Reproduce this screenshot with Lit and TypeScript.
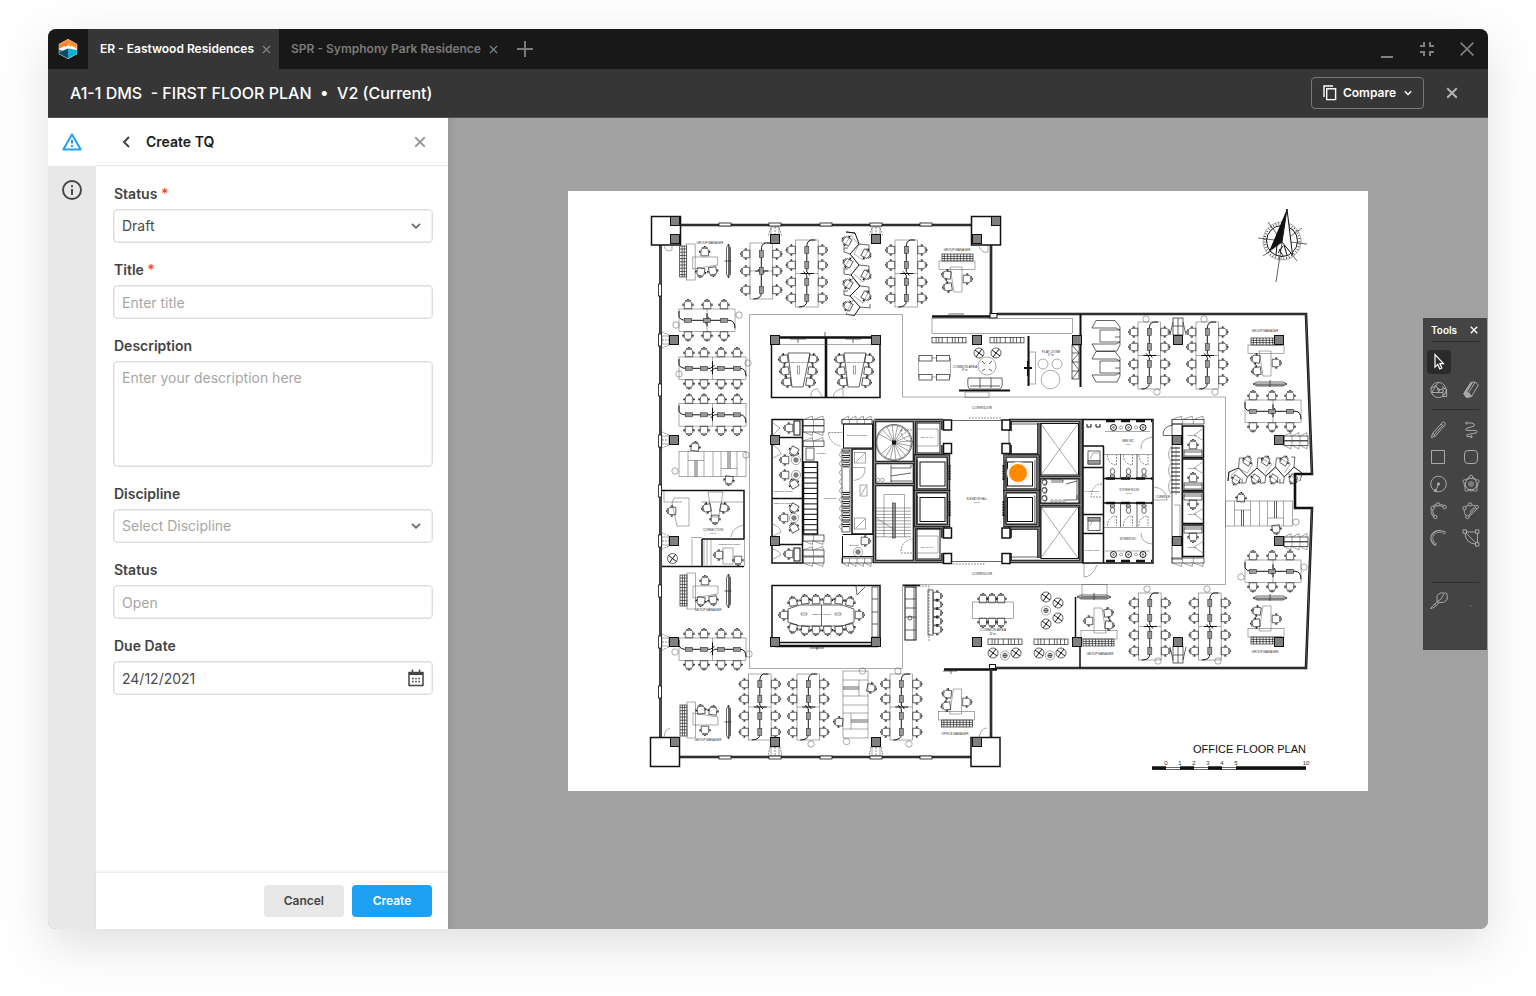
import { LitElement, html, svg, css } from "lit";
import { customElement, property } from "lit/decorators.js";

type Pt = [number, number];

/* ---------- small icons ---------- */
const cross = (size: number, w: number) => html`<svg width=${size} height=${size} viewBox="0 0 10 10" fill="none" stroke="currentColor" stroke-width=${w} aria-hidden="true"><path d="M1 1 9 9M9 1 1 9" /></svg>`;
const chevron = html`<svg class="chev" width="10" height="6" viewBox="0 0 10 6" fill="none" stroke="currentColor" stroke-width="1.7" aria-hidden="true"><path d="M1 .8 5 4.8 9 .8" /></svg>`;

const logo = html`<svg width="20" height="20" viewBox="0 0 20 20" aria-hidden="true">
  <path d="M10 0 19.2 5V15L10 20 .8 15V5Z" fill="#fff" />
  <path d="M10 .6 1.2 5.2V9.8L6.4 7 7.6 7.8 10 6.2Z" fill="#f47b30" />
  <path d="M10 .6 18.8 5.2V9.8L13.8 7 12.4 7.8 10 6.2Z" fill="#fba43a" />
  <path d="M10 .6 1.2 5.2V7.6L10 3.4 18.8 7.6V5.2Z" fill="#f98b34" />
  <path d="M10 9.4 1.2 13.2V14.8L10 19.4Z" fill="#0d4a68" />
  <path d="M1.2 10.6 5 11.6 1.2 13.4Z" fill="#1786ad" />
  <path d="M10 9.4 18.8 11V14.8L10 19.4Z" fill="#10a6cf" />
  <path d="M10 9.4 14.6 12.4 18.8 10.4V13L10 15Z" fill="#14b0d6" />
</svg>`;

/* ---------- palette icons ---------- */
const glyph = (body: unknown) => html`<svg width="20" height="20" viewBox="0 0 20 20" fill="none" stroke="currentColor" stroke-width="1" aria-hidden="true">${body}</svg>`;
const node = (x: number, y: number) => svg`<circle cx=${x} cy=${y} r="1.7" fill="#444" />`;
const box = (x: number, y: number) => svg`<path d="M${x - 1.7} ${y - 1.7}h3.4v3.4h-3.4z" fill="#444" />`;
const tools: Record<string, unknown> = {
  Select: glyph(svg`<path d="M6 2.6V15L8.8 12.4 10.8 17 12.8 16 10.9 11.6H14.4Z" stroke="#fff" stroke-width="1.2" />`),
  Fill: glyph(svg`<circle cx="9.5" cy="10" r="7.6" /><path d="M2 8.5 7 5.5 9.5 10 16.8 8.2M7 5.5 10 2.4M7 5.5 2.8 12.5H14M10 10V12.5M14 6V16.5H17.6V9" /><circle cx="9.5" cy="9.5" r="1" />`),
  Eraser: glyph(svg`<path d="M10 2.4 14.4 2 17.4 5 10.6 16.4 5.4 17.4 2.8 13.6Z" /><path d="M2.8 13.6 7.6 12.6 10.6 16.4 5.4 17.4ZM2.8 13.6 10 2.4 11.4 2.6 5 13.2Z" fill="currentColor" /><path d="M7.6 12.6 14.4 2" />`),
  Pencil: glyph(svg`<path d="M2.4 17.6 3.6 13.4 13.2 2.6Q15 1.4 16 2.6 17 3.6 15.8 5.2L6.4 16ZM3.6 13.4 6.4 16M12 4 14.8 6.4M5 14.8 13.8 5" />`),
  Freehand: glyph(svg`<path d="M4.5 3H11Q15 4 13 6L5.5 8.4Q3 10 6 10.4H14Q18 11 15 13L8 14.2Q4 14.6 6 16.6H11M6 1.5 4.5 3 6 4.6M9.6 15 11.4 16.6 9.6 18.2" />`),
  Rectangle: glyph(svg`<path d="M2.5 3.5h13v13h-13z" />`),
  "Rounded rectangle": glyph(svg`<rect x="3.5" y="3.5" width="13" height="13" rx="3.5" />`),
  Circle: glyph(svg`<circle cx="9.5" cy="10" r="7.8" /><path d="M9.5 10 7 16" /><circle cx="9.5" cy="10" r="1.2" fill="currentColor" /><circle cx="6.4" cy="16.6" r="1.2" fill="currentColor" />`),
  Polygon: glyph(svg`<path d="M10 3 16.4 7.4 14.5 15.5H5.5L3.6 7.4Z" /><circle cx="10" cy="10.200" r="6.800" /><circle cx="10" cy="10" r="2.3" /><circle cx="10" cy="10" r=".6" />${[[10, 3], [16.4, 7.4], [14.5, 15.5], [5.5, 15.5], [3.6, 7.4]].map(([x, y]) => node(x, y))}`),
  Arc: glyph(svg`<path d="M6.2 16Q1.4 12 3.6 6.6 8 1.4 15.4 5.4" stroke-width="2.4" /><path d="M6.2 16Q1.4 12 3.6 6.6 8 1.4 15.4 5.4" stroke="#444" stroke-width=".8" />${node(6.4, 16)}${node(3.6, 7)}${node(9, 3.4)}${node(15.6, 6)}`),
  Sector: glyph(svg`<path d="M6.4 16Q1.8 12 3.8 6.6 8 1.6 15.4 5.6L6.4 16M8.4 11.4 12.6 6.6M8 15.600 16.600 7.600" />${node(6.4, 16)}${node(3.6, 7)}${node(9, 3.4)}${node(15.8, 6)}`),
  Curve: glyph(svg`<path d="M7.2 17Q1.4 13.4 3.2 7.6 7 .8 16.4 5" stroke-width="2.8" /><path d="M7 16.6Q1.6 13.2 3.4 7.6 7 1.2 16 5" stroke="#444" stroke-width="1" />`),
  Bezier: glyph(svg`<path d="M4 4H16.4V16.4M4 4 16.4 16.4M4 4Q3.4 15.6 16.4 16.4" />${box(3.8, 3.6)}${box(16.2, 3.6)}${box(16.2, 16.4)}`),
  Brush: glyph(svg`<path d="M1.4 17.6Q5 17 7.6 14.4L10.4 11.4M1.6 17.4Q2.8 15.4 7.8 11.2M8 11V4.6L11.4 2H16.4Q18.4 2.2 18.2 4.4V8.6L14.6 11.4H9.8ZM8 11 12 8 14.8 3.2M5.4 13.2 7.6 14.6" />`),
  More: glyph(svg`<path d="M8.6 15.2h2.4" stroke="#666" />`),
};

/* ---------- floor plan building blocks ---------- */
const P = (d: string, cls = "n") => svg`<path class=${cls} d=${d} />`;
const R = (x: number, y: number, w: number, h: number, cls = "n") => svg`<rect class=${cls} x=${x} y=${y} width=${w} height=${h} />`;
const C = (x: number, y: number, r: number, cls = "n") => svg`<circle class=${cls} cx=${x} cy=${y} r=${r} />`;
const T = (x: number, y: number, s: string, size = 3) => svg`<text x=${x} y=${y} font-size=${size} text-anchor="middle">${s}</text>`;
const range = (n: number) => Array.from({ length: n }, (_, i) => i);

const chair = (x: number, y: number, a = 0) => svg`<g transform="translate(${x} ${y}) rotate(${a})">
  <path class="c" d="M-3.8-3.8H3.8L3.6 2.4Q3 3.8 0 3.8T-3.6 2.4ZM-3 4.2Q0 6 3 4.2M-5 0V1.6M5 0V1.6" />
  <path class="d" d="M-5.6-.8h1.4v1.4h-1.4zM4.2-.8h1.4v1.4h-1.4zM-.6 4.8h1.2v1.2h-1.2z" /></g>`;

const pillar = (x: number, y: number) => R(x - 4.5, y - 4.5, 9, 9, "pillar");

/* back-to-back benches, screens along the spine, seats on both sides */
const benchV = (x: number, y: number, h: number, seats: number[]) => {
  const m = y + h / 2, c = x + 11.3;
  return svg`${R(x, y, 22.6, h)}${P(`M${x} ${m}H${x + 22.6}`)}
    ${P(`M${x + 20} ${y}H${c + 4}Q${c} ${y + 1} ${c} ${y + 7}V${m - 2}L${c + 3} ${m + 2}M${c - 6} ${m}H${c + 7}M${c - 3} ${m - 2}L${c} ${m + 2}V${y + h - 6}Q${c} ${y + h} ${c - 8} ${y + h}`, "k2")}
    ${seats.map((s) => svg`${R(c - 2, y + s - 3.5, 4, 7, "m")}${chair(x - 4, y + s, 90)}${chair(x + 26.6, y + s, -90)}`)}`;
};
const benchH = (x: number, y: number, w: number, seats: number[]) => {
  const m = x + w / 2, c = y + 11.3;
  return svg`${R(x, y, w, 22.6)}${P(`M${m} ${y}V${y + 22.6}`)}
    ${P(`M${x} ${y + 2}V${c - 4}Q${x + 1} ${c} ${x + 7} ${c}H${m - 2}L${m + 2} ${c - 3}M${m} ${c - 7}V${c + 6}M${m - 2} ${c + 3}L${m + 2} ${c}H${x + w - 6}Q${x + w} ${c} ${x + w} ${c + 8}`, "k2")}
    ${seats.map((s) => svg`${R(x + s - 3.5, c - 2, 7, 4, "m")}${chair(x + s, y - 4, 180)}${chair(x + s, y + 26.6, 0)}`)}`;
};
const four = [10, 25, 42, 58];

const manager = (x: number, y: number, t = "") => svg`<g transform="translate(${x} ${y}) ${t}">
  ${R(-11, -16, 7, 31, "k")}${P("M-8.6-16V15M-6.4-16V15" + range(9).map((i) => `M-11 ${-13 + i * 3.2}H-4`).join(""), "k")}
  ${R(-4, -18, 8.4, 36)}${P("M2-5H27V3L2 7Z")}${chair(14, -10, 180)}${chair(10, 10, 8)}${chair(22, 9, -8)}</g>`;
const screen = (x: number, y: number, a = 0) => svg`<g transform="translate(${x} ${y}) rotate(${a})">
  ${P("M0-17 2-13V13L0 17-2 13V-13ZM0-17V17M1-14V14", "k")}${P("M-4 0H3", "k")}</g>`;

const shelf = (x: number, y: number, w = 34) => svg`${R(x, y, w, 5.4, "k")}${P([.12, .2, .3, .45, .6, .68, .78, .9].map((f) => `M${x + w * f} ${y}v5.4`).join(""), "k")}`;
const cabinets = (x: number, y: number, w: number, h: number, n: number, up: boolean) => {
  const s = w / n;
  return svg`${R(x, y, w, h, "k")}${range(n).map((i) => P(`M${x + i * s} ${y}v${h}M${x + i * s} ${up ? y : y + h}l${s - 1} ${up ? -3.4 : 3.4}v${up ? 3.4 : -3.4}`, "fine"))}`;
};
const window_ = (x: number, y: number, vertical = false) => (vertical ? R(x - 1.5, y - 6, 3, 12, "win") : R(x - 6, y - 1.5, 12, 3, "win"));
const fourChair = (x: number, y: number) => svg`${C(x, y, 5, "k")}${P(`M${x - 4} ${y - 3}L${x + 4} ${y + 3}M${x + 3} ${y - 4}L${x - 3} ${y + 4}`, "k2")}`;
const plant = (x: number, y: number) => svg`${C(x, y, 4.6)}${C(x, y, 2.2, "k")}${P(`M${x - 2} ${y}h4M${x} ${y - 2}v4`, "k")}`;

/* staggered desks running along a folded partition */
const zigzag = (tx: number, ty: number, t: string) => svg`<g transform="translate(${tx} ${ty}) ${t}">
  ${P("M3 0 12 1 16 12 7 22 16 33 8 43 17 54 7 64 17 75 11 84", "k2")}
  ${P("M3 0 12 1M16 12 26 13V17L23 17M7 22 1 20V16H5M16 33 26 34V38H23M8 43 1 42V37H5M17 54 26 55V59H23M7 64 1 63V59H5M17 75 27 76V72M3 82 11 84", "k")}
  ${P("M0 16 8 3 15 12M16 12 11 22 20 28 26 17M0 37 9 24 16 33M11 42 20 50 26 38M0 59 10 46 16 54M11 64 20 71 26 59M3 82 10 68 17 75")}
  ${chair(4, 9, 120)}${chair(5, 31, 120)}${chair(5, 52, 120)}${chair(5, 74, 120)}${chair(23, 22, -60)}${chair(23, 43, -60)}${chair(23, 64, -60)}</g>`;

const lounge = (x: number, y: number) => svg`${R(x, y, 67, 25)}${P(`M${x + 9} ${y}v25M${x + 25} ${y}v25M${x + 34} ${y}v25M${x + 42} ${y}v25M${x + 58} ${y}v25M${x + 9} ${y + 9}h16M${x + 42} ${y + 17}h16`)}
  ${P(`M${x + 16} ${y + 9}v16M${x + 18} ${y + 9}v16M${x + 49} ${y}v17M${x + 51} ${y}v17`, "k")}`;

const meeting = (x: number) => svg`${P(`M${x} 353h22l-7 34h-11z`, "k")}${R(x + 9.5, 366, 2, 8, "fine")}
  ${chair(x - 4, 359, 82)}${chair(x - 3, 371, 82)}${chair(x - 1, 382, 82)}${chair(x + 25, 359, -82)}${chair(x + 24, 371, -82)}${chair(x + 22, 382, -82)}${T(x + 11, 362.5, "MEETING ROOM", 2.4)}`;

const lift = (x: number, y: number, car: number) => svg`${R(x, y, 33, 34, "shaft")}${R(x, y, 33, 34, "core")}${R(x + 1.8, y + 1.8, 29.4, 30.4)}${R(car, y + 6, 25, 24, "k2")}${P(`M${car - 2.4} ${y + 4}v28M${car + 27.4} ${y + 4}v28`, "k")}`;

const cubicle = (y: number, flip: boolean) => svg`${R(1182.5, y, 21, 31.5, "w2")}
  ${R(1184, flip ? y + 2 : y + 24, 18, 6, "k")}${P(`M1184 ${flip ? y + 4 : y + 26}h18`, "k")}
  ${chair(1193, flip ? y + 12 : y + 19, flip ? 0 : 180)}${P(`M1204 ${flip ? y + 16 : y + 2}L1194 ${flip ? y + 22 : y + 9}L1204 ${flip ? y + 29 : y + 15}`)}
  ${T(1192, flip ? y + 22.6 : y + 10, "MEETING", 2)}`;

const wc = (y: number, up: boolean) => svg`${[1112.5, 1128.5, 1144].map((x) => svg`${R(x - 2, up ? y + 6 : y - 4, 4, 2, "k")}${svg`<ellipse class="k" cx=${x} cy=${up ? y + 2.4 : y + 1.4} rx="2.2" ry="3" />`}
  ${P(up ? `M${x - 5} ${y - 14}q0 9 9 10v-10` : `M${x - 5} ${y + 17}q0-9 9-10v10`, "dash")}`)}`;

const grid: Pt[] = [
  [675, 221], [675, 239], [775, 239], [876, 239], [996, 221], [977, 239],
  ...[674, 775, 876, 977, 1077, 1178, 1279].map((x) => [x, 340] as Pt),
  ...[440, 541].flatMap((y) => [674, 775, 1177, 1279].map((x) => [x, y] as Pt)),
  ...[674, 775, 876, 977, 1077, 1178, 1279].map((x) => [x, 642] as Pt),
  [675, 742], [775, 742], [876, 742], [977, 742],
];

const shell = svg`
  ${P("M681 225H972M660.5 245V737M991 245V317M680 757H971M991 668V737M932 316.5H997M944 669.5H997M997 314H1306L1312 474H1295V508H1312L1306 668H996", "wall")}
  ${P("M681 225H972M660.5 245V737M680 757H971M997 314H1306L1312 474M1312 508 1306 668H996M991 245V317M991 668V737", "mid")}
  ${R(990, 313.5, 7, 4.5, "paper")}${R(989.5, 664.5, 6, 4, "paper")}
  ${R(651.5, 216.5, 29, 28.5, "w2")}${R(971.5, 216.5, 29, 28.5, "w2")}${R(650.5, 737.5, 29, 29, "w2")}${R(971, 737.5, 29, 29, "w2")}
  ${[725, 775, 826, 876, 926].map((x) => svg`${window_(x, 224.5)}${window_(x, 757.5)}`)}
  ${[290, 340, 390, 441, 491, 541, 591, 642, 692].map((y) => window_(660, y, true))}
  ${P("M749.5 668.5V314.5H902.5V397H1225.5V584.5H902.5V668.5Z")}
  ${P("M664 245q1 8 8 5V246M979 246q3 8 9 6V246M664 737q1-8 6-9M979 737q2-9 8-9")}`;

const clusters = svg`
  ${manager(690.7, 262)}${screen(728.5, 261)}${T(710, 243.6, "GROUP MANAGER")}
  ${manager(691, 591)}${screen(728.5, 591)}${T(708, 611, "GROUP MANAGER")}
  ${manager(691, 720, "scale(1 -1)")}${screen(728.5, 722)}${T(708, 741, "GROUP MANAGER")}
  ${manager(957, 265, "rotate(90)")}${T(957, 251, "GROUP MANAGER")}
  ${manager(1266, 349, "rotate(90)")}${screen(1270, 384, 90)}${T(1265, 332, "GROUP MANAGER")}
  ${manager(956.5, 716, "scale(1 -1) rotate(90)")}${T(955, 735, "OFFICE MANAGER")}
  ${manager(1099, 635, "rotate(-90)")}${screen(1094, 597, 90)}${T(1100, 655, "GROUP MANAGER")}
  ${manager(1266, 633, "scale(1 -1) rotate(90)")}${screen(1270, 598, 90)}${T(1265, 653, "GROUP MANAGER")}
  ${benchV(750, 243, 56, [11, 28, 47])}${benchV(795.5, 240, 67, four)}${benchV(895, 240, 67, four)}
  ${benchV(1138, 322, 67, four)}${benchV(1196, 322, 67, four)}
  ${benchV(1138.5, 593, 67, four)}${benchV(1198.5, 593, 67, four)}
  ${benchV(748.5, 674, 66, four)}${benchV(797, 674, 66, four)}${benchV(890, 674, 66, four)}
  ${benchH(679, 309, 56, [9, 28, 45])}${benchH(679, 357, 67, four)}${benchH(679, 403.5, 67, four)}${benchH(679, 638, 67, four)}
  ${benchH(1245, 400, 56, [8, 27, 45])}${benchH(1245, 560, 56, [8, 27, 45])}
  ${[[739, 315], [676, 325], [748, 363], [679, 374], [746, 455], [675, 471], [675, 652], [749, 654], [1146, 319], [1157, 392], [1204, 319], [1215, 392], [1147, 589], [1207, 589], [1158, 661], [1218, 661], [1304, 567], [1241, 577], [1296, 522], [862.5, 671], [898, 671], [811, 744], [846.5, 741.5], [909, 744]].map(([x, y]) => C(x, y, 3.2))}
  ${zigzag(843, 232, "")}${zigzag(1228, 484, "rotate(-90) scale(1 .88)")}
  ${lounge(679, 451.5)}${lounge(1225.5, 501)}${chair(695, 447, 188)}${chair(729, 480, 8)}${chair(1241, 498, 185)}${chair(1276, 529, -8)}
  <g transform="translate(868 671) rotate(90)">${lounge(0, 0)}</g>${chair(871, 688, -80)}${chair(839, 722, 95)}`;

const rooms = svg`
  ${P("M771.5 337V397.5H880V337", "w2")}${P("M771.5 337.5H880M826 337V397", "wall")}${P("M771 344.5H880M811 397.5q-1-8 6-9l6 9M833 397.5q1-8 10-9v9")}
  ${P("M790 339h16M845 339h16M798 339v4M853 339v4M825 332v5", "k")}${meeting(788)}${meeting(844)}
  ${R(772, 585.5, 108, 57, "w2")}${P("M775 646H878", "wall")}${P("M810 648h14M817 646v4", "k")}
  ${P("M788 609 800 605H842L854 609V622L842 626H800L788 622ZM821.5 605v21", "k")}${R(801, 613, 6, 2, "fine")}${R(835, 613, 6, 2, "fine")}${T(821.5, 615, "MEETING ROOM", 2.4)}
  ${[793, 805, 816, 827.5, 839, 850].map((x, i) => svg`${chair(x, i % 5 ? 600 : 602, 180 + (i - 2.5) * 5)}${chair(x, i % 5 ? 630 : 628, -(i - 2.5) * 5)}`)}${chair(784, 615, 90)}${chair(859, 615, -90)}
  ${R(872, 587, 6, 50, "k")}${P("M872 599h6M872 612h6M872 624h6M856 586l1 9 8-8", "k")}
  ${P("M662 490.5H744V539M662 566.5H744M702 539V566M702 539H744", "w2")}${P("M744.5 539V566M664 491v11h18M701 502h43M704 540v25M707 540v25M711 540v25M692 539v26M731 537q1-9 12-12")}
  ${P("M674 498H689V526H677L672 503ZM708 492h15l-4 25h-7z")}${R(723, 548, 10, 16)}${P("M691 537.5h11")}
  ${chair(672, 511, 90)}${chair(707, 508, 80)}${chair(724, 508, -80)}${chair(715, 519, 0)}${chair(719, 555, 90)}${chair(738, 560, 0)}${fourChair(672.5, 558.5)}
  ${T(713, 530.6, "CONNECTION", 3)}${T(713, 533.6, "48.5 m²", 2.2)}${T(729, 545, "CONNECTION ROOM", 2.2)}`;

const commons = svg`
  ${R(932, 318.5, 140.5, 15)}${shelf(932, 337.5)}${shelf(990, 337.5)}
  ${R(918.5, 358, 32, 19)}${[[919, 355.5], [936.5, 355.5], [919, 374.5], [936.5, 374.5]].map(([x, y]) => R(x, y, 13, 5.5, "k paper"))}
  ${C(987, 366, 9)}${fourChair(979, 353)}${fourChair(996, 353)}${P("M982 361l3 3M992 361l-3 3M982 371l3-2M992 371l-3-2", "k")}
  ${T(965, 367.5, "COMMON AREA", 3.2)}${T(965, 371, "37 m²", 2.6)}
  ${P("M968 378q-1 10 2 11H1000q3-1 2-11ZM980 378v10M991 378v10M970 386h30", "k")}${P("M959 390.5H1010", "mid2")}${R(965, 392, 24, 5.5)}
  ${P("M1028.5 336V386M1080.5 314V387", "wall3")}${R(1029.5, 352, 6, 32)}${P("M1028 361v15M1024 368h8", "mid2")}
  ${C(1043, 364, 5)}${C(1057, 364, 5)}${C(1050.5, 379.5, 9.3)}${T(1051, 352.5, "PLAY ZONE", 3.4)}${T(1051, 356, "17 m²", 2.6)}
  ${R(1072, 345, 7, 34, "k")}${P("M1072 345l7 8-7 8 7 9-7 9M1072 353h7M1072 362h7M1072 371h7", "k")}
  ${[0, 31].map((o) => P(`M1092 ${328 + o}L1096 ${320.5 + o}H1115L1120 ${327 + o}V${345 + o}L1117 ${351 + o}H1096L1092 ${344 + o}M1092 ${328 + o}h24l4 2M1092 ${344 + o}h24l4-2M1120 ${330 + o}H1100v12h20M1115 ${337 + o}h5`, "k"))}
  ${P("M903 585.5H920M1075.5 597V640M1080 642V668", "w2")}
  ${R(905, 587, 11, 53, "k2")}${P("M905 599h11M905 608h11M905 617h11M905 630h11M914 587v53", "k")}${C(910, 618, 2, "k")}
  ${R(928, 590, 5, 45, "k")}${range(5).map((i) => chair(937, 596 + i * 8.4, -90))}${P("M916 586H929V641", "dash")}
  ${R(972.5, 602, 41, 16.5)}${[983, 992, 1001].map((x) => svg`${chair(x, 599, 180)}${chair(x, 622, 0)}`)}
  ${T(993, 631, "COMMON AREA", 3.4)}${T(993, 634.5, "82 m²", 2.6)}
  ${fourChair(1046, 597)}${fourChair(1058, 603)}${fourChair(1058, 618)}${fourChair(1046, 624)}${plant(1046, 610.5)}
  ${shelf(988, 639)}${shelf(1034, 639)}
  ${fourChair(993, 653)}${fourChair(1016, 653)}${plant(1005, 655.5)}${fourChair(1039, 653)}${fourChair(1061, 653)}${plant(1050, 655.5)}
  ${R(1082, 584.5, 25, 12)}${P("M943 671h14M951 671v3M949 316.5v-3M950 314h14", "k")}
  ${T(982, 408.5, "CORRIDOR", 3.8)}${T(982, 574.6, "CORRIDOR", 3.8)}`;

const services = svg`
  ${R(772, 419.5, 30.5, 143.5, "w2")}${P("M772 437.5H802M772 498.5H802M772 544.5H802", "w2")}
  ${chair(794, 451, 30)}${chair(785, 460, 90)}${chair(785, 475, 90)}${chair(794, 484, 150)}${plant(796, 460)}${plant(796, 475)}
  ${chair(794, 508, 30)}${chair(784, 518, 90)}${chair(794, 528, 150)}${plant(794, 518)}${chair(789, 428, 90)}${chair(789, 554, 90)}
  ${P("M773 423l7 5-7 7M773 445q7 4 8 9l-8 4M773 524q8 4 8 8l-8 4M773 549q7 2 8 6l-8 4")}${R(794, 421, 6, 14, "k2")}${R(794, 548, 6, 13, "k2")}
  ${T(783, 491.5, "MEETING ROOM", 2.4)}${T(783, 504, "MEETING ROOM", 2.4)}
  ${cabinets(803, 419.5, 21, 6, 2, true)}${cabinets(803, 426, 21, 6, 2, false)}${cabinets(803, 441, 21, 5.5, 2, true)}${cabinets(803, 535, 21, 6, 2, false)}${cabinets(803, 550, 21, 6, 2, true)}${cabinets(803, 557, 21, 6, 2, false)}
  ${R(806, 448, 8, 12, "k")}${R(803.5, 462, 14, 72, "w2")}${P(range(13).map((i) => `M803 ${467.5 + i * 5.2}h15`).join(""), "k2")}
  ${T(821, 454, "PRINTER", 2.2)}${T(830, 498.5, "CORRIDOR", 2.4)}
  ${cabinets(842, 419.5, 30, 4.5, 4, true)}${R(843.5, 424, 29, 24, "k2")}${T(857, 436.4, "ELECTRIC ROOM", 2.4)}${P("M828.5 432.5H842M828.5 433q1 11 12 13", "dash")}
  ${R(842, 449, 8, 83, "k")}${P([...range(4), 9, 10, 11, 12, 13, 14, 15, 16].map((i) => `M842 ${451 + i * 4.6}h8M843 ${453 + i * 4.6}h6`).join(""), "k2")}${P(range(9).map((i) => `M842 ${451 + i * 9}q-5 4 0 7`).join(""), "fine")}
  ${R(852, 449, 21, 85, "w2")}${R(854.5, 452.5, 11, 10.5)}${R(860, 485, 7, 11)}${R(854.5, 518, 11, 11)}${P("M856 462l9-9M861 495l5-9M856 528l9-9M853 467.5h12q1 11-11 13")}
  ${P("M842.5 534.5H873M842.5 536V563M842 556.5H873", "k2")}${chair(865, 541, -90)}${plant(858, 552)}${cabinets(842, 558, 30, 5, 4, false)}${T(854, 545.6, "BUFFET", 2.2)}
  ${R(1172, 424, 10, 135, "k")}${P(range(12).map((i) => `M1171 ${448 + i * 4}h9`).join(""), "k2")}${P("M1171 447q-5 8 0 15M1171 463q-5 8 0 15M1171 479q-5 8 0 15M1176 446v49M1174 505h6v32h-6")}
  ${cabinets(1172, 419.5, 32, 4.5, 3, true)}${cabinets(1172, 558, 32, 5, 3, false)}
  ${cubicle(426, false)}${cubicle(459, false)}${cubicle(492, true)}${cubicle(525, true)}${P("M1163 435.5H1172M1163 435q0-9 10-10", "k")}
  ${R(1173, 318, 10, 17, "k")}${P("M1173 326h10M1178 318v17M1173 322l-3 13M1183 322l3 13", "k")}
  ${R(1173, 646, 10, 17, "k")}${P("M1173 655h10M1178 646v17M1173 660l-3-13M1183 660l3-13", "k")}
  ${[436, 537].map((y) => svg`${cabinets(1284, y, 24, 4.5, 3, true)}${cabinets(1284, y + 5, 24, 4.5, 3, false)}`)}
  ${[775, 876].map((x) => svg`${R(x - 4, 227, 8, 8)}${P(`M${x} 227v8M${x - 4} 228l-3 8M${x + 4} 228l3 8`, "dash")}${R(x - 4, 747, 8, 9)}${P(`M${x} 747v9M${x - 5} 747l-2 9M${x + 5} 747l2 9`, "dash")}`)}
  ${[340, 440, 541, 642].map((y) => svg`${R(662, y - 4, 7, 8)}${P(`M662 ${y}h7M669 ${y - 5}l-7-3M669 ${y + 5}l-7 3`, "dash")}`)}`;

const treads = range(17).map((i) => {
  const a = (-150 + i * 18) * (Math.PI / 180);
  return `M894 442.5L${894 + 17.5 * Math.cos(a)} ${442.5 + 17.5 * Math.sin(a)}`;
}).join("");

/* structural walls: dark outline with a grey fill down the middle */
const coreWalls = "M874.5 420.5H943M874.5 420.5V561.5H943M914.5 420V561M875 462.5H914M875 484.5H914M915 455.5H943M915 527.5H943M943 421V430M943 445V456M943 527V538M943 553V562"
  + "M1009 420.5H1081V561.5H1009M1010 421V431M1010 445V455H1040M1010 553V561M1010 538V528H1040M1039 423V558M1039 477.5H1081M1039 504.5H1081";

const core = svg`
  ${P(coreWalls, "thick")}${P(coreWalls, "core")}
  ${C(894, 442.5, 18, "k")}${C(894, 442.5, 17)}${P(treads, "fine")}${R(892, 440.5, 4, 4, "d")}
  ${R(917, 423, 23, 30, "k2")}${R(917, 529, 23, 30, "k2")}${P("M917 429h21v17h-21M917 536h21v17h-21")}${P("M901 430H913M901 430q0 11 12 12M901 553H913M901 551q1-11 12-12", "dash")}${T(927, 437.5, "TEC. SHAFT", 2.2)}${T(927, 548, "TEC. SHAFT", 2.2)}
  ${P("M891 465v17M891 468h20v-3M891 476l20-3M891 482v-1h21", "k")}${C(878, 480, 1.8)}${C(882.5, 480, 1.8)}
  ${P("M884 537V494.5H904.5V537")}${R(892.5, 503, 3, 35, "m")}${P(range(10).map((i) => `M876 ${508 + i * 3.2}H911`).join(""), "fine")}${P("M876 518 895 530")}
  ${lift(915.5, 456, 920)}${lift(915.5, 491.5, 920)}${lift(1005, 456, 1007.5)}${lift(1005, 491.5, 1007.5)}
  ${[[943.5, 420], [943.5, 443.5], [943.5, 528], [943.5, 553.5], [1002, 420], [1002, 443.5], [1002, 528], [1002, 553.5]].map(([x, y]) => R(x, y, 8, 10, "w2 paper"))}
  ${P("M952 420.5H1002M952 561.5H1002", "k")}${P("M969 418h32v3M953 564h31v-3", "dash")}${P("M949.5 465V480M949.5 501V516M1003.5 465V480M1003.5 501V516", "mid3")}
  ${T(977, 500, "ELEVATOR HALL", 2.6)}${T(977, 503, "52 m²", 2.2)}
  ${R(1041, 423.5, 37.5, 51.5, "k2")}${R(1041, 507, 37.5, 51.5, "k2")}${P("M1041 424 1078 475M1078 424 1041 475M1041 507 1078 558M1078 507 1041 558")}${P("M1009 424H1039M1009 445V430M1009 557H1039", "k")}
  ${R(1041, 479, 37.5, 24, "k")}${[[1044.5, 482], [1044.5, 490], [1044.5, 498]].map(([x, y]) => svg`${C(x, y, 2.6, "k")}${P(`M${x - 2} ${y - 1}q3-3 4 1t-3 3`, "k")}`)}${P("M1051 480h12v2h-12M1066 484l11-3M1077 480V500M1065 500h12v-5", "k")}${[1052, 1056, 1060, 1064].map((x) => C(x, 501, 1.3, "fine"))}
  ${R(1083, 419.5, 70, 143.5, "w3")}${P("M1103.5 446V563M1083 446H1104M1083 467.5H1104M1083 514.5H1104M1083 533.5H1104M1103 478.5H1153M1103 503H1153", "w3")}
  ${[[1088, 451], [1088, 517.5]].map(([x, y]) => svg`${R(x, y, 12, 13, "k")}${P(`M${x + 2} ${y + 8}l3-6h6`)}`)}${R(1088, 460.5, 12, 3.6, "m")}${R(1088, 517.5, 12, 3.6, "m")}
  ${P("M1106 421H1152M1106 561H1152M1106 478.500H1152M1106 503H1152", "dashwall")}${P("M1105 431.500H1150M1105 551H1150")}${[1113.5, 1128.5, 1143].map((x) => svg`${C(x, 427.5, 3, "k2")}${C(x, 554.5, 3, "k2")}${C(x, 427.5, .8, "k")}${C(x, 554.5, .8, "k")}`)}${[1121, 1136].map((x) => svg`${C(x, 427.5, 1.5)}${C(x, 554.5, 1.5)}`)}
  ${P("M1104 454.500H1152M1104 527.500H1152", "fine")}${P("M1120.5 454V478M1137 454V478M1120.5 503V527M1137 503V527", "k")}${wc(469, true)}${wc(509, false)}
  ${P("M1087 424v3h4v-3M1096 424v3h4v-3", "k2")}${T(1128, 442, "MEN WC", 2.8)}${T(1128, 445, "18 m²", 2)}${T(1128, 539.5, "WOMEN WC", 2.8)}${T(1129, 491, "SYSTEM ROOM", 2.6)}${T(1129, 494, "15.8 m²", 2)}${T(1092, 491.5, "SYSTEM ROOM", 2)}${T(1092, 550.5, "SYSTEM ROOM", 2)}${T(1163, 497.5, "CORRIDOR", 2.6)}
  ${P("M1141 449q-1-10 11-12M1141 533q0 10 11 11M1154 487q12 1 13 13h-13M1084 563v14q8 0 13-12")}${P("M1102 484q-10 0-11 13h11", "dash")}`;

const compass = svg`<g transform="translate(1282 241)">
  ${C(0, 0, 19)}${C(0, 0, 15.5, "k2")}<circle class="tick" r="17.500" />
  ${P("M-24-3 25 3M-14-19 15 20M20-13-19 15M5-32-6 41", "k")}
  <path class="d" d="M5-32-13 10.500 0 1Z" /><path class="k2 paper" d="M5-32 0 1 10.500 14Z" />
  ${P("M-5 4l-1 10M-3 8l4 7M2 4l3 10M-4 12l5-7", "k2")}</g>`;

const scale = svg`<g>
  ${P("M1152 767.500H1306", "k")}${P("M1152 768H1166M1180 768H1194M1208 768H1222M1236 768H1306", "bar")}${P("M1152 769.500H1306", "k")}
  ${[["0", 1166], ["1", 1180], ["2", 1194], ["3", 1208], ["4", 1222], ["5", 1236], ["10", 1306]].map(([s, x]) => svg`<text x=${x} y="765" font-size="6" text-anchor="middle">${s}</text>`)}
  <text x="1306" y="753" font-size="11" text-anchor="end" class="name">OFFICE FLOOR PLAN</text></g>`;

@customElement("floor-plan")
class FloorPlan extends LitElement {
  static styles = css`
    :host { display: block; background: #fff; }
    svg { display: block; width: 100%; height: auto; fill: none; stroke: #111; }
    text { fill: #333; stroke: none; font-family: "Liberation Sans", Arial, sans-serif; }
    .name { fill: #111; }
    .n { stroke: #555; stroke-width: .5; }
    .fine { stroke: #444; stroke-width: .5; }
    .c { stroke: #222; stroke-width: .7; }
    .k { stroke: #222; stroke-width: .7; }
    .k2 { stroke-width: 1; }
    .d { fill: #111; stroke: none; }
    .m { fill: #999; stroke: #333; stroke-width: .6; }
    .pillar { fill: #808080; stroke: #111; stroke-width: 1; }
    .wall { stroke-width: 2.6; }
    .wall3 { stroke-width: 2; }
    .mid { stroke: #777; stroke-width: .6; }
    .mid2 { stroke-width: 2; }
    .mid3 { stroke-width: 2; stroke-dasharray: 2 .6; }
    .w2, .w3 { stroke-width: 1.5; }
    .paper, .win { fill: #fff; }
    .win { stroke-width: .8; }
    .thick { stroke-width: 3.6; stroke: #111; }
    .shaft { stroke-width: 3.4; stroke: #111; fill: #fff; }
    .core { stroke: #8a8a8a; stroke-width: 1.4; }
    .dash { stroke: #444; stroke-width: .6; stroke-dasharray: 2 1; }
    .dashwall { stroke-width: 2.4; stroke-dasharray: 9 6; }
    .tick { stroke-width: 2; stroke-dasharray: .6 2.2; }
    .bar { stroke-width: 3.6; }
    .halo { fill: #fff; stroke: #ddd; stroke-width: .5; }
    .pin { fill: #ff8a00; stroke: #fff; stroke-width: 1; }
  `;
  render() {
    return html`<svg viewBox="568 191 800 600" role="img" aria-label="Office floor plan">
      ${shell}${rooms}${commons}${services}${clusters}${core}
      ${grid.map(([x, y]) => pillar(x, y))}${compass}${scale}
      <circle class="halo" cx="1018" cy="473" r="11" />
      <circle class="pin" cx="1018" cy="473" r="9.500" />
    </svg>`;
  }
}

@customElement("tool-palette")
class ToolPalette extends LitElement {
  @property() active = "Select";
  static styles = css`
    :host { display: block; width: 64px; background: #444; color: #a9a9a9; font-family: Inter, sans-serif; box-sizing: border-box; padding-bottom: 32px; }
    button { border: 0; padding: 0; background: none; color: inherit; display: grid; place-items: center; }
    .head { display: flex; align-items: center; justify-content: space-between; height: 23px; padding: 0 9px 0 8px; color: #fff; font-size: 10px; font-weight: 600; }
    .rule { height: 1px; margin: 0 8px; background: #2c2c2c; }
    .group { display: grid; grid-template-columns: 1fr 1fr; grid-auto-rows: 27px; justify-items: center; align-items: center; }
    .group button { width: 24px; height: 24px; border-radius: 4px; }
    .group .on { background: #2b2b2b; }
    .wide { grid-auto-rows: 28px; padding: 6px 0 5px; }
    .draw { padding: 6px 0 31px; }
    .foot { padding: 4px 0; }
  `;
  private group(cls: string, names: string[]) {
    return html`<div class="group ${cls}">${names.map((n) => n ? html`<button class=${n === this.active ? "on" : ""} aria-label=${n}>${tools[n]}</button>` : html`<span></span>`)}</div>`;
  }
  render() {
    return html`<div class="head">Tools<button aria-label="Close tools">${cross(8, 1.7)}</button></div>
      <div class="rule"></div>
      ${this.group("wide", ["Select", "", "Fill", "Eraser"])}
      <div class="rule"></div>
      ${this.group("draw", ["Pencil", "Freehand", "Rectangle", "Rounded rectangle", "Circle", "Polygon", "Arc", "Sector", "Curve", "Bezier"])}
      <div class="rule"></div>
      ${this.group("foot", ["Brush", "More"])}`;
  }
}

@customElement("app-root")
class AppRoot extends LitElement {
  static styles = css`
    :host { display: flex; box-sizing: border-box; min-height: 100vh; padding: 29px 48px 67px; background: #fefefe; font-family: Inter, sans-serif; font-size: 14px; line-height: 20px; color: #444; }
    *, *::before { box-sizing: border-box; }
    button { border: 0; padding: 0; background: none; color: inherit; font: inherit; display: inline-flex; align-items: center; justify-content: center; }
    svg { display: block; flex: none; }
    .window { flex: 1; min-width: 0; display: flex; flex-direction: column; border-radius: 8px; overflow: hidden; background: #a2a2a2; box-shadow: 0 16px 48px rgba(0, 0, 0, .12); }
    .tabs { display: flex; height: 40px; padding-right: 1px; background: #181818; color: #7b7b7b; font-size: 12px; font-weight: 600; }
    .logo { width: 40px; display: grid; place-items: center; }
    .tab { display: flex; align-items: center; gap: 8px; padding: 0 8px 0 12px; }
    .tab a { color: inherit; text-decoration: none; }
    .tab.on { background: #363636; color: #fff; }
    .tab button { width: 9px; color: #8a8a8a; }
    .add { width: 38px; }
    .controls { display: flex; margin-left: auto; }
    .controls button { width: 40px; color: #808080; }
    .title { display: flex; align-items: center; height: 49px; padding: 0 28px 0 22px; background: #363636; border-bottom: 1px solid #505050; color: #fff; }
    h1 { flex: 1; margin: 0; font-size: 16px; font-weight: 500; white-space: pre; }
    .compare { height: 32px; gap: 6px; padding: 0 11px; border: 1px solid #777; border-radius: 4px; font-size: 12px; font-weight: 600; }
    .compare .chev { width: 8px; margin-left: 2px; }
    .title .close { width: 16px; margin-left: 20px; color: #b5b5b5; }
    .body { flex: 1; display: flex; min-height: 0; }
    .rail { width: 48px; background: #e8e8e8; }
    .rail button { width: 48px; height: 48px; color: #444; }
    .rail .on { background: #fff; color: #1ea1f2; }
    .panel { width: 352px; display: flex; flex-direction: column; background: #fff; }
    .phead { display: flex; align-items: center; height: 48px; padding: 0 20px 0 22px; border-bottom: 1px solid #e6e6e6; }
    .phead h2 { flex: 1; margin: 0 0 0 12px; font-size: 14px; font-weight: 600; color: #1b1b1b; }
    .phead button { width: 16px; height: 24px; color: #444; }
    .phead .x { color: #999; }
    form { flex: 1; display: flex; flex-direction: column; }
    .fields { flex: 1; display: flex; flex-direction: column; gap: 17px; padding: 18px 15px 18px 17px; }
    .field { display: flex; flex-direction: column; gap: 5px; }
    label { padding-left: 1px; font-weight: 600; }
    .req { color: #f44336; }
    .box { display: grid; align-items: center; }
    .box > * { grid-area: 1 / 1; }
    .box .chev, .box .cal { justify-self: end; margin-right: 12px; color: #666; pointer-events: none; }
    .box .cal { margin-right: 9px; color: #444; }
    input, select, textarea { appearance: none; width: 100%; height: 34px; margin: 0; padding: 0 8px; border: 1px solid #dcdcdc; border-radius: 4px; box-shadow: inset 0 0 0 1px #efefef; background: #fff; color: #4a4a4a; font: 14px/20px Inter, sans-serif; outline: 0; }
    textarea { display: block; height: 106px; padding-top: 6px; resize: none; }
    .muted, ::placeholder { color: #a6a6a6; opacity: 1; }
    .actions { display: flex; justify-content: flex-end; gap: 8px; padding: 12px 16px; border-top: 1px solid #ececec; box-shadow: 0 -1px 3px rgba(0, 0, 0, .06); }
    .actions button { min-width: 80px; height: 32px; padding: 0 20px; border-radius: 4px; background: #e8e8e8; font-size: 12px; font-weight: 600; }
    .actions .go { background: #1ea1f2; color: #fff; }
    .canvas { position: relative; flex: 1; min-width: 0; display: flex; justify-content: center; align-items: flex-start; padding: 73px 24px 24px; background: linear-gradient(90deg, #999, #a2a2a2 10px); }
    floor-plan { flex: 0 1 800px; }
    tool-palette { position: absolute; right: 1px; top: 200px; }
  `;
  render() {
    return html`<div class="window">
      <nav class="tabs">
        <div class="logo">${logo}</div>
        <div class="tab on"><a href="#er">ER - Eastwood Residences</a><button aria-label="Close tab">${cross(9, 1.4)}</button></div>
        <div class="tab"><a href="#spr">SPR - Symphony Park Residence</a><button aria-label="Close tab">${cross(9, 1.4)}</button></div>
        <button class="add" aria-label="New tab"><svg width="16" height="16" viewBox="0 0 16 16" stroke="currentColor" stroke-width="2"><path d="M8 0V16M0 8H16" /></svg></button>
        <div class="controls">
          <button aria-label="Minimise"><svg width="14" height="18" viewBox="0 0 14 18" stroke="currentColor" stroke-width="2"><path d="M1 17H13" /></svg></button>
          <button aria-label="Restore"><svg width="16" height="16" viewBox="0 0 16 16" fill="none" stroke="currentColor" stroke-width="2"><path d="M1 5H5V1M11 1V5H15M1 11H5V15M11 15V11H15" /></svg></button>
          <button aria-label="Close window">${cross(16, 1)}</button>
        </div>
      </nav>
      <header class="title">
        <h1>A1-1 DMS  - FIRST FLOOR PLAN  •  V2 (Current)</h1>
        <button class="compare"><svg width="14" height="16" viewBox="0 0 14 16" fill="none" stroke="currentColor" stroke-width="1.400"><path d="M1 12V1H10M3.700 3.700H12.600V14.600H3.700Z" /></svg>Compare${chevron}</button>
        <button class="close" aria-label="Close drawing">${cross(12, 1.6)}</button>
      </header>
      <div class="body">
        <nav class="rail">
          <button class="on" aria-label="Queries"><svg width="20" height="18" viewBox="0 0 20 18" fill="none" stroke="currentColor" stroke-width="2" stroke-linejoin="round"><path d="M10 1.400 18.700 16.400H1.300ZM10 6.800V10.400M10 12V14" /></svg></button>
          <button aria-label="Information"><svg width="20" height="20" viewBox="0 0 20 20" fill="none" stroke="currentColor" stroke-width="1.900"><circle cx="10" cy="10" r="9" /><path d="M10 9V15M10 5.200V7.200" /></svg></button>
        </nav>
        <section class="panel">
          <div class="phead">
            <button aria-label="Back"><svg width="8" height="12" viewBox="0 0 8 12" fill="none" stroke="currentColor" stroke-width="2"><path d="M7 1 2 6 7 11" /></svg></button>
            <h2>Create TQ</h2>
            <button class="x" aria-label="Close panel">${cross(12, 1.6)}</button>
          </div>
          <form>
            <div class="fields">
              <div class="field"><label for="status">Status <span class="req">*</span></label><div class="box"><select id="status"><option>Draft</option></select>${chevron}</div></div>
              <div class="field"><label for="title">Title <span class="req">*</span></label><input id="title" placeholder="Enter title" /></div>
              <div class="field"><label for="desc">Description</label><textarea id="desc" placeholder="Enter your description here"></textarea></div>
              <div class="field"><label for="disc">Discipline</label><div class="box"><select id="disc" class="muted"><option>Select Discipline</option></select>${chevron}</div></div>
              <div class="field"><label for="state">Status</label><input id="state" placeholder="Open" /></div>
              <div class="field"><label for="due">Due Date</label><div class="box"><input id="due" .value=${"24/12/2021"} /><svg class="cal" width="16" height="18" viewBox="0 0 16 18" fill="none" stroke="currentColor" stroke-width="1.500"><path d="M1 3.500H15V16.400H1Z" stroke-linejoin="round" /><path d="M1 4.500H15" stroke-width="3" /><path d="M4.500 .6V3M11.500 .6V3" /><path d="M4 9.400h8M4 12.600h8" stroke-dasharray="1.600 1.600" /></svg></div></div>
            </div>
            <div class="actions"><button type="button">Cancel</button><button type="button" class="go">Create</button></div>
          </form>
        </section>
        <main class="canvas"><floor-plan></floor-plan><tool-palette></tool-palette></main>
      </div>
    </div>`;
  }
}
